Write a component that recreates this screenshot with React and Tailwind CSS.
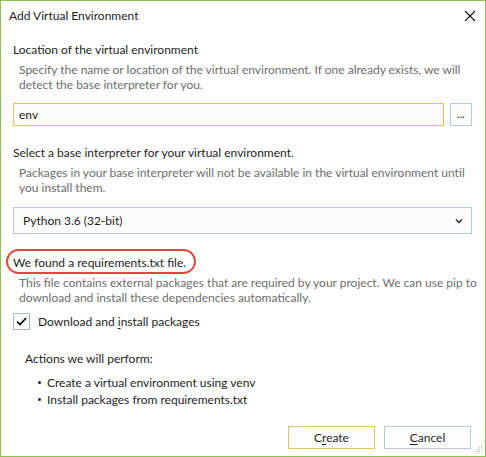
export default function App() {
  const font = { fontFamily: 'Lato, "Noto Sans", sans-serif' };
  return (
    <div
      className="relative w-[486px] h-[457px] bg-white border border-[#8cc152] flex flex-col text-[12px] text-[#1e1e1e] overflow-hidden whitespace-nowrap"
      style={font}
    >
      {/* title bar */}
      <div className="h-[30px] flex items-center justify-between pl-[8px] pr-[9px] shrink-0">
        <span className="leading-[16px]">Add Virtual Environment</span>
        <svg width="12" height="12" viewBox="0 0 12 12">
          <path d="M1 1L11 11M11 1L1 11" stroke="#111" strokeWidth="1.1" />
        </svg>
      </div>

      <div className="flex flex-col pl-[12px] pr-[13px]">
        <div className="mt-[11px] leading-[16px]">Location of the virtual environment</div>
        <div className="mt-[4px] pl-[6px] leading-[15px] text-[#6d6d6d]">
          Specify the name or location of the virtual environment. If one already exists, we will
          <br />
          detect the base interpreter for you.
        </div>

        <div className="mt-[11px] flex gap-[6px]">
          <div className="flex-1 h-[23px] border border-[#e5c365] bg-[#fcfcfc] flex items-center pl-[5px] leading-[16px]">
            env
          </div>
          <div className="w-[22px] h-[23px] border border-[#bcc7dc] bg-[#fcfcfc] flex items-center justify-center text-[11px] leading-[10px] pb-[2px]">
            ...
          </div>
        </div>

        <div className="mt-[19px] leading-[16px]">Select a base interpreter for your virtual environment.</div>
        <div className="mt-[4px] pl-[6px] leading-[15px] text-[#6d6d6d]">
          Packages in your base interpreter will not be available in the virtual environment until
          <br />
          you install them.
        </div>

        <div className="mt-[12px] h-[27px] border border-[#bcc7dc] bg-[#fcfcfc] flex items-center justify-between pl-[9px] pr-[8px]">
          <span className="leading-[16px]">Python 3.6 (32-bit)</span>
          <svg width="8" height="6" viewBox="0 0 8 6">
            <path d="M1 1.5L4 4.5L7 1.5" stroke="#222" strokeWidth="1.4" fill="none" />
          </svg>
        </div>

        <div className="mt-[21px] relative self-start">
          <span className="leading-[16px] block">We found a requirements.txt file.</span>
          <span className="absolute left-[-7px] top-[-6px] w-[190px] h-[25px] border-2 border-[#e2463f] rounded-full"></span>
        </div>
        <div className="mt-[4px] pl-[6px] leading-[15px] text-[#6d6d6d]">
          This file contains external packages that are required by your project. We can use pip to
          <br />
          download and install these dependencies automatically.
        </div>

        <div className="mt-[8px] flex items-center gap-[8px]">
          <div className="w-[17px] h-[17px] border border-[#aab6ca] bg-white flex items-center justify-center">
            <svg width="11" height="9" viewBox="0 0 11 9">
              <path d="M1 4.5L4 7.5L10 1" stroke="#000" strokeWidth="1.6" fill="none" />
            </svg>
          </div>
          <span className="leading-[16px]">
            Download and <span className="underline underline-offset-2">i</span>nstall packages
          </span>
        </div>

        <div className="mt-[21px] pl-[12px] leading-[16px]">Actions we will perform:</div>
        <ul className="mt-[7px] pl-[25px] flex flex-col">
          <li className="flex items-center gap-[6px] leading-[17px]">
            <span className="w-[3px] h-[3px] bg-[#1e1e1e] rounded-full"></span>
            Create a virtual environment using venv
          </li>
          <li className="flex items-center gap-[6px] leading-[17px]">
            <span className="w-[3px] h-[3px] bg-[#1e1e1e] rounded-full"></span>
            Install packages from requirements.txt
          </li>
        </ul>

        <div className="mt-[18px] flex justify-end gap-[9px] pr-[1px]">
          <button className="w-[87px] h-[23px] border border-[#e5c365] bg-[#fdfdfd] leading-[16px]">
            C<span className="underline underline-offset-2">r</span>eate
          </button>
          <button className="w-[87px] h-[23px] border border-[#bcc7dc] bg-[#fdfdfd] leading-[16px]">
            <span className="underline underline-offset-2">C</span>ancel
          </button>
        </div>
      </div>

      {/* resize grip */}
      <svg width="9" height="9" viewBox="0 0 9 9" className="absolute right-[2px] bottom-[3px]">
        <g fill="#b8b8b8">
          <rect x="7" y="1" width="1" height="1" />
          <rect x="5" y="3" width="1" height="1" />
          <rect x="7" y="3" width="1" height="1" />
          <rect x="3" y="5" width="1" height="1" />
          <rect x="5" y="5" width="1" height="1" />
          <rect x="7" y="5" width="1" height="1" />
          <rect x="1" y="7" width="1" height="1" />
          <rect x="3" y="7" width="1" height="1" />
          <rect x="5" y="7" width="1" height="1" />
          <rect x="7" y="7" width="1" height="1" />
        </g>
      </svg>
    </div>
  );
}
